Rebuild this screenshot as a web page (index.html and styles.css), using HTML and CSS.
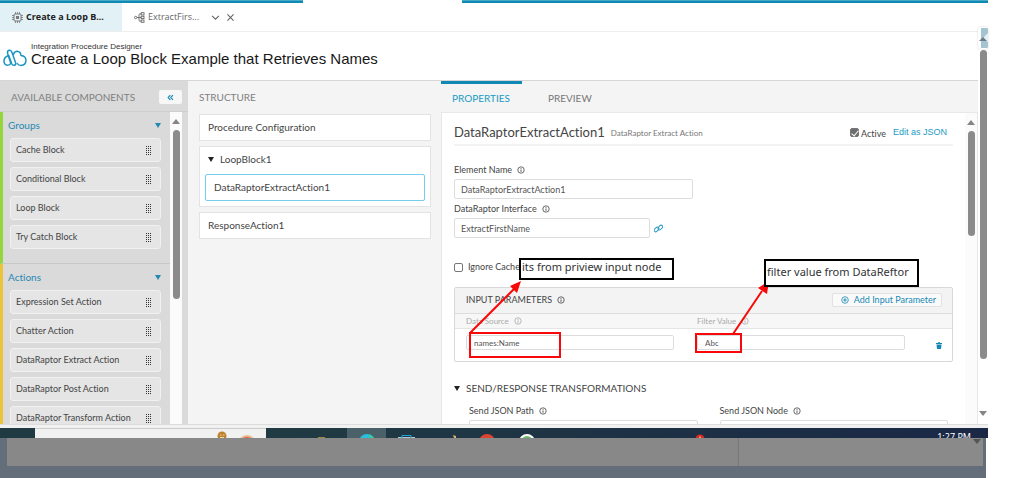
FILE: index.html
```html
<!DOCTYPE html>
<html lang="en">
<head>
<meta charset="utf-8">
<title>Integration Procedure Designer</title>
<link rel="stylesheet" href="styles.css">
</head>
<body>
<svg class="defs" aria-hidden="true">
  <symbol id="info" viewBox="0 0 8 8"><circle cx="4" cy="4" r="3.200" fill="none" stroke="currentColor" stroke-width=".8"/><path d="M4 3.500v2.300M4 2v.8" stroke="currentColor" stroke-width=".9"/></symbol>
  <symbol id="grip" viewBox="0 0 5 9"><path d="M.5 0v9M2.500 0v9M4.500 0v9" stroke="currentColor" stroke-width="1" stroke-dasharray="1 1"/></symbol>
</svg>
<div class="screen">
  <div class="strip"><span class="strip-left"></span><span class="strip-right"></span></div>
  <div class="window">
    <div class="app">
      <nav class="tabs">
        <a href="#" class="tab tab-on">
          <svg class="tab-icon" viewBox="0 0 11 11"><g fill="none" stroke="#777"><rect x="2" y="2" width="7" height="7" rx="1"/><path d="M3.500 0v2M5.500 0v2M7.500 0v2M3.500 9v2M5.500 9v2M7.500 9v2M0 3.500h2M0 5.500h2M0 7.500h2M9 3.500h2M9 5.500h2M9 7.500h2" stroke-width=".8"/></g><rect x="4" y="4" width="3" height="3" fill="#777"/></svg>
          <span>Create a Loop B...</span>
        </a>
        <a href="#" class="tab">
          <svg class="tab-icon" viewBox="0 0 11 11"><g fill="none" stroke="#666" stroke-width=".9"><circle cx="1.700" cy="5.500" r="1.200"/><path d="M3 5.500h4M7 1.800H5.800Q5 1.800 5 3v5q0 1.200.8 1.200H7"/><rect x="7.200" y=".7" width="2.800" height="2.300"/><rect x="7.200" y="4.300" width="2.800" height="2.300"/><rect x="7.200" y="8" width="2.800" height="2.300"/></g></svg>
          <span>ExtractFirs...</span>
        </a>
        <button class="tab-btn" aria-label="Tab menu"><svg viewBox="0 0 8 8"><path d="M1 2.500l3 3 3-3" fill="none" stroke="#666"/></svg></button>
        <button class="tab-btn" aria-label="Close tab"><svg viewBox="0 0 8 8"><path d="M1.300 1.300l5.400 5.400M6.700 1.300L1.300 6.700" fill="none" stroke="#666"/></svg></button>
      </nav>
      <header class="header">
        <svg class="logo" viewBox="0 0 24 18"><g fill="none" stroke="#1b96c0" stroke-width="1.500" stroke-linecap="round" stroke-linejoin="round"><path d="M4.500 7Q1 8.500 1 12q0 3.800 3.500 4.300 2.500 0 3.300-2L4.600 4.500Q4 1.800 6 1.200q1.900-.3 2.700 1.600l4 11.200q.3 2-1.500 2.300-1.700.2-2.500-1.600L5.800 6.500"/><path d="M10.500 5.500Q11 2.500 14 2.200q3.700.2 4 4.300 4.900.6 5 4.900-.3 4.800-5 5-2.300 0-3.700-1.800"/></g></svg>
        <div class="heading"><span class="eyebrow">Integration Procedure Designer</span><h1>Create a Loop Block Example that Retrieves Names</h1></div>
      </header>
      <main class="columns">
        <aside class="palette">
          <div class="palette-head"><h2>AVAILABLE COMPONENTS</h2><button class="collapse" aria-label="Collapse"><svg viewBox="0 0 8 8"><path d="M3.800 1.200L1.300 4l2.500 2.800M6.800 1.200L4.300 4l2.500 2.800" fill="none" stroke="#1589b5" stroke-width="1.300"/></svg></button></div>
          <div class="palette-body">
            <div class="palette-list">
              <section class="group green">
                <h3>Groups<svg class="tri" viewBox="0 0 6 5"><path d="M0 0h6L3 5z"/></svg></h3>
                <button class="item">Cache Block<svg><use href="#grip"/></svg></button>
                <button class="item">Conditional Block<svg><use href="#grip"/></svg></button>
                <button class="item">Loop Block<svg><use href="#grip"/></svg></button>
                <button class="item">Try Catch Block<svg><use href="#grip"/></svg></button>
              </section>
              <section class="group yellow">
                <h3>Actions<svg class="tri" viewBox="0 0 6 5"><path d="M0 0h6L3 5z"/></svg></h3>
                <button class="item">Expression Set Action<svg><use href="#grip"/></svg></button>
                <button class="item">Chatter Action<svg><use href="#grip"/></svg></button>
                <button class="item">DataRaptor Extract Action<svg><use href="#grip"/></svg></button>
                <button class="item">DataRaptor Post Action<svg><use href="#grip"/></svg></button>
                <button class="item">DataRaptor Transform Action<svg><use href="#grip"/></svg></button>
              </section>
            </div>
            <div class="scroll"><svg class="arrow" viewBox="0 0 8 5"><path d="M0 5h8L4 0z"/></svg><span class="thumb thumb-left"></span></div>
          </div>
        </aside>
        <section class="structure">
          <h2>STRUCTURE</h2>
          <div class="cards">
            <div class="card">Procedure Configuration</div>
            <div class="card card-loop">
              <div class="card-title"><svg class="tri dark" viewBox="0 0 6 5"><path d="M0 0h6L3 5z"/></svg>LoopBlock1</div>
              <div class="card card-on">DataRaptorExtractAction1</div>
            </div>
            <div class="card">ResponseAction1</div>
          </div>
        </section>
        <section class="properties">
          <nav class="ptabs"><a href="#" class="ptab ptab-on">PROPERTIES</a><a href="#" class="ptab">PREVIEW</a></nav>
          <div class="panel">
            <form class="form">
              <div class="title-row">
                <h2>DataRaptorExtractAction1</h2><span class="kind">DataRaptor Extract Action</span>
                <label class="active"><input type="checkbox" class="check" checked><span>Active</span></label><a href="#" class="json">Edit as JSON</a>
              </div>
              <div class="field"><label for="ename">Element Name <svg class="info"><use href="#info"/></svg></label><input id="ename" class="text wide" value="DataRaptorExtractAction1"></div>
              <div class="field"><label for="iface">DataRaptor Interface <svg class="info"><use href="#info"/></svg></label>
                <div class="with-link"><input id="iface" class="text mid" value="ExtractFirstName"><svg class="link" viewBox="0 0 8 8"><g fill="none" stroke="#2a9ac4" stroke-width=".9"><rect x="-.2" y="3.500" width="4.800" height="2.800" rx="1.400" transform="rotate(-45 2.200 4.900)"/><rect x="3.200" y="1.800" width="4.800" height="2.800" rx="1.400" transform="rotate(-45 5.600 3.200)"/></g></svg></div>
              </div>
              <label class="ignore"><input type="checkbox" class="check">Ignore Cache</label>
              <div class="params">
                <div class="params-head"><span>INPUT PARAMETERS <svg class="info"><use href="#info"/></svg></span>
                  <button type="button" class="add"><svg viewBox="0 0 8 8"><circle cx="4" cy="4" r="3.300" fill="none" stroke="#1589b5" stroke-width=".8"/><path d="M4 2.200v3.600M2.200 4h3.600" stroke="#1589b5" stroke-width=".9"/></svg>Add Input Parameter</button></div>
                <div class="params-cols sub"><label for="src">Data Source <svg class="info"><use href="#info"/></svg></label><label for="flt">Filter Value <svg class="info"><use href="#info"/></svg></label></div>
                <div class="params-cols row"><input id="src" class="text small" value="names:Name"><input id="flt" class="text small" value="Abc"><button type="button" class="trash" aria-label="Delete"><svg viewBox="0 0 6 7"><path d="M0 1h2V.3h2V1h2v1H0zM.5 2.500h5L5 7H1z" fill="#1589b5"/></svg></button></div>
              </div>
              <h3 class="send"><svg class="tri dark" viewBox="0 0 6 5"><path d="M0 0h6L3 5z"/></svg>SEND/RESPONSE TRANSFORMATIONS</h3>
              <div class="send-cols">
                <div class="field"><label for="path">Send JSON Path <svg class="info"><use href="#info"/></svg></label><input id="path" class="text"></div>
                <div class="field"><label for="node">Send JSON Node <svg class="info"><use href="#info"/></svg></label><input id="node" class="text"></div>
              </div>
            </form>
            <div class="scroll"><svg class="arrow" viewBox="0 0 8 5"><path d="M0 5h8L4 0z"/></svg><span class="thumb thumb-right"></span></div>
            <div class="notes">
              <svg class="note-art" viewBox="0 0 524 312"><g fill="none" stroke="#f80808" stroke-width="2"><rect x="28" y="220" width="90" height="24"/><rect x="254" y="221" width="45" height="18"/><path d="M28 220L73 175M291 221l29-43"/></g><path d="M79 168l-4 12-7-7zM327 168l-2 13-9-6z" fill="#f80808"/></svg>
              <div class="note note-a">its from priview input node</div>
              <div class="note note-b">filter value from DataReftor</div>
            </div>
          </div>
        </section>
      </main>
    </div>
    <div class="outer-scroll">
      <svg class="widget" viewBox="0 0 10 22"><path d="M3 1h7v20H3z" fill="#a5c4d1"/><path d="M4 12l6-6v9z" fill="#e7f0f4"/><path d="M1 14h8L5 10z" fill="#697d88"/></svg>
      <span class="outer-thumb"></span>
      <svg class="arrow down" viewBox="0 0 8 5"><path d="M0 0h8L4 5z"/></svg>
    </div>
  </div>
  <div class="ledge"></div>
  <footer class="taskbar">
    <div class="search"><svg viewBox="0 0 60 10"><circle cx="16" cy="7" r="4.500" fill="#bd8130"/><path d="M14 6h1.500M17 6h1.500M14 8.500h4" stroke="#f4dca8"/><circle cx="41" cy="15" r="9" fill="#e8b98a"/><circle cx="41" cy="15" r="7" fill="#e65b4e"/></svg></div>
    <svg class="apps" viewBox="0 0 460 10"><path d="M81 0h39v10H81z" fill="#4b616a"/><path d="M52 9h7v1h-7z" fill="#a28b38"/><circle cx="101" cy="14" r="8" fill="#27bfe0"/><path d="M103 6.300a8 8 0 0 1 5 3.700h-5z" fill="#39c9a0"/><path d="M132 9.500h17" stroke="#b8c8cc"/><path d="M136 10V7.500h9V10" fill="none" stroke="#1aa7e0"/><path d="M187 7l3 1v2h-2z" fill="#e0ad70"/><circle cx="221" cy="14" r="8" fill="#dc4430"/><circle cx="261" cy="14" r="8" fill="#fff"/><circle cx="261" cy="14" r="6" fill="#68bd69"/><circle cx="434" cy="11" r="4.500" fill="#d92c20"/><path d="M434 8.500v2" stroke="#fff"/></svg>
    <span class="clock">1:27 PM</span>
  </footer>
  <div class="under"><div class="under-main"></div><div class="under-side"><svg viewBox="0 0 8 5"><path d="M0 0h8L4 5z" fill="#555"/></svg></div></div>
</div>
</body>
</html>
```
FILE: styles.css
```css
* { box-sizing: border-box; }
body { margin: 0; background: #fff; color: #444; font: 9px/12px Lato, "Open Sans", sans-serif; font-variant-ligatures: none; }
h1, h2, h3 { margin: 0; font-weight: 400; }
a { color: inherit; text-decoration: none; }
button, input { font: inherit; color: inherit; font-variant-ligatures: none; }
button { border: 0; padding: 0; background: none; }
svg { flex: none; display: block; }
.defs { position: absolute; width: 0; height: 0; }
.screen { display: flex; flex-direction: column; height: 100vh; padding-right: 36px; overflow: hidden; }

.strip { display: flex; justify-content: space-between; gap: 159px; height: 3px; flex: none; }
.strip span { background: #1089b5; border-top: 1px solid #48aac6; }
.strip-left { width: 303px; }
.strip-right { flex: 1; }
.window { display: flex; flex: 1; min-height: 0; }
.app { display: flex; flex-direction: column; flex: 1; min-width: 0; }
.tabs { display: flex; align-items: center; height: 29px; flex: none; border-bottom: 1px solid #eee; font-family: "Open Sans", sans-serif; font-size: 9px; color: #666; }
.tab { display: flex; align-items: center; gap: 3px; height: 28px; padding-left: 12px; }
.tab-on { width: 122px; background: #e2f1f5; color: #222; font-weight: 700; }
.tab-icon { width: 11px; height: 11px; }
.tab-btn { margin-left: 6px; }
.tab + .tab-btn { margin-left: 12px; }
.tab-btn svg { width: 9px; height: 9px; }
.header { display: flex; align-items: center; gap: 4px; padding: 2px 3px 5px; height: 49px; flex: none; border-bottom: 1px solid #d6d6d6; }
.logo { width: 24px; height: 18px; margin-top: 6px; }
.heading { font-family: "Liberation Sans", sans-serif; display: flex; flex-direction: column; }
.eyebrow { font-size: 8px; line-height: 8px; color: #333; }
h1 { font-size: 15px; line-height: 16px; color: #181818; }
.columns { display: grid; grid-template-columns: 188px 253px 1fr; flex: 1; min-height: 0; background: #f4f4f4; }

.palette { display: flex; flex-direction: column; min-height: 0; background: #dadada; }
.palette-head { display: flex; justify-content: space-between; align-items: center; height: 31px; padding: 2px 6px 0 11px; border-bottom: 1px solid #cecece; flex: none; }
.palette-head h2, .structure h2 { font-size: 10px; color: #808080; }
.collapse { display: grid; place-items: center; width: 23px; height: 14px; border-radius: 2px; background: #f7f7f7; }
.collapse svg { width: 7px; height: 7px; }
.palette-body { display: flex; flex: 1; min-height: 0; padding-right: 6px; }
.palette-list { flex: 1; overflow: hidden; }
.group { display: flex; flex-direction: column; gap: 5px; padding: 0 9px 14px 7px; border-left: 3px solid; border-bottom: 1px solid #c8c8c8; }
.green { border-left-color: #95d63c; }
.yellow { border-left-color: #eac53b; }
.group h3 { display: flex; align-items: center; justify-content: space-between; height: 21px; padding-top: 5px; margin-left: -2px; font-size: 10px; color: #2589b2; }
.tri { width: 6px; height: 5px; fill: #2589b2; }
.dark { fill: #222; }
.item { display: flex; align-items: center; justify-content: space-between; height: 24px; padding: 0 9px 0 5px; border: 1px solid #f1f1f1; border-radius: 3px; background: #e5e5e5; }
.item svg { width: 5px; height: 9px; color: #333; }
.scroll { display: flex; flex-direction: column; align-items: center; gap: 6px; width: 12px; padding-top: 7px; background: #fbfbfb; }
.arrow { width: 8px; height: 5px; fill: #858585; }
.thumb { width: 7px; border-radius: 4px; background: #8b8b8b; }
.thumb-left { height: 169px; }
.thumb-right { height: 105px; }

.structure h2 { height: 31px; padding: 10px 0 0 11px; }
.cards { display: flex; flex-direction: column; gap: 5px; padding: 2px 10px 0 11px; font-size: 10px; }
.card { display: flex; align-items: center; height: 27px; padding: 0 9px 1px 8px; border: 1px solid #e3e3e3; background: #fff; }
.card-loop { display: block; height: 61px; padding: 0 5px; }
.card-title { display: flex; align-items: center; gap: 6px; height: 27px; padding: 0 4px 3px 3px; }
.card-on { border-color: #75ccec; border-radius: 2px; }

.properties { display: flex; flex-direction: column; min-width: 0; min-height: 0; }
.ptabs { display: flex; height: 31px; flex: none; font-size: 10px; color: #777; }
.ptab { padding: 11px 11px 0; margin-left: 15px; }
.ptab-on { width: 81px; margin: 0; padding-top: 8px; border-top: 3px solid #1089b5; color: #199bc4; }
.panel { position: relative; display: flex; flex: 1; min-height: 0; border: 1px solid #e8e8e8; border-bottom: 0; background: #fff; }
.form { display: flex; flex-direction: column; flex: 1; min-width: 0; padding: 6px 12px 0; overflow: hidden; }
.title-row { display: flex; align-items: center; height: 27px; flex: none; border-bottom: 2px solid #f3f3f3; }
.title-row h2 { font-size: 13px; }
.kind { margin-left: 6px; padding-top: 2px; font-size: 8px; color: #777; }
.active { display: flex; align-items: center; gap: 2px; margin-left: auto; padding-top: 2px; }
.active span { padding-top: 3px; }
.check { appearance: none; width: 9px; height: 9px; margin: 0; border: 1px solid #777; border-radius: 2px; background: #fff; }
.check:checked { background: #6e6e6e; }
.check:checked::before { content: ""; display: block; width: 3px; height: 6px; margin-left: 2px; border: solid #fff; border-width: 0 1px 1px 0; transform: rotate(40deg); }
.json { margin: 0 6px 0 7px; padding-top: 1px; font-family: "Liberation Sans", sans-serif; color: #199bc4; }
.field { display: flex; flex-direction: column; flex: none; row-gap: 1px; }
.title-row + .field { margin-top: 16px; }
.field label { display: flex; align-items: center; gap: 5px; height: 16px; }
.info { width: 8px; height: 8px; }
.text { width: 100%; min-width: 0; height: 20px; padding: 0 6px; border: 1px solid #ddd; border-radius: 2px; background: #fff; color: #555; }
.wide { width: 239px; }
.field + .field { margin-top: 2px; }
.mid { width: 196px; }
.with-link { display: flex; align-items: center; gap: 4px; }
.link { width: 9px; height: 9px; }
.ignore { display: flex; align-items: center; gap: 5px; height: 14px; margin-top: 22px; flex: none; }
.params { margin-top: 13px; flex: none; border: 1px solid #d8d8d8; border-radius: 2px; }
.params-head { display: flex; align-items: center; justify-content: space-between; height: 26px; padding: 0 10px 1px 11px; background: #f3f3f3; border-bottom: 1px solid #ddd; }
.params-head span { display: flex; align-items: center; gap: 5px; }
.add { display: flex; align-items: center; gap: 5px; height: 14px; padding: 0 5px 0 8px; border: 1px solid #e2e2e2; border-radius: 2px; background: #fafafa; color: #1589b5; }
.add svg { width: 8px; height: 8px; }
.params-cols { display: grid; grid-template-columns: 1fr 1fr 14px; column-gap: 23px; padding: 0 10px 0 11px; }
.sub { height: 15px; background: #f7f7f7; border-bottom: 1px solid #e5e5e5; color: #aaa; font-size: 8px; }
.sub label { display: flex; align-items: center; gap: 5px; }
.row { align-items: start; height: 32px; padding-top: 6px; }
.small { height: 15px; padding: 0 7px; font-size: 8px; }
.trash { width: 6px; margin: 7px 0 0 auto; }
.trash svg { width: 6px; height: 7px; }
.send { display: flex; align-items: center; gap: 6px; height: 14px; margin-top: 19px; flex: none; font-size: 10px; }
.send-cols { display: grid; grid-template-columns: 1fr 1fr; gap: 22px; margin-top: 8px; padding: 0 5px 0 15px; }
.send-cols .field { margin: 0; }

.notes { position: absolute; inset: 0 0 auto 0; height: 0; }
.note-art { position: absolute; left: 0; top: 0; width: 524px; height: 312px; }
.note { position: absolute; border: 2px solid #000; background: #fff; font: 11px/13px "Noto Sans", sans-serif; color: #333; white-space: nowrap; padding-left: 1px; }
.note-a { left: 77px; top: 145px; width: 155px; height: 22px; }
.note-b { left: 322px; top: 146px; width: 155px; height: 28px; padding-top: 4px; }

.outer-scroll { display: flex; flex-direction: column; align-items: center; width: 10px; padding-top: 24px; }
.widget { width: 10px; height: 22px; border-radius: 3px; box-shadow: 0 0 2px #ccc; }
.outer-thumb { width: 7px; height: 309px; margin-top: 1px; border-radius: 4px; background: #8b8b8b; }
.down { margin: auto 0 8px; }
.ledge { height: 4px; flex: none; border-top: 1px solid #ddd; background: #f1f1f1; }
.taskbar { display: flex; height: 10px; flex: none; overflow: hidden; background: linear-gradient(90deg, #203a43 30%, #1a2846); color: #fff; }
.search { width: 231px; margin-left: 35px; background: #f1f1f1; border-top: 1px solid #ccc; }
.search svg { width: 60px; height: 10px; margin-left: 171px; }
.apps { width: 460px; height: 10px; }
.clock { margin: 3px 17px 0 auto; font-family: "Noto Sans", sans-serif; }
.under { display: flex; height: 40px; margin-right: 2px; padding: 0 3px 12px 7px; flex: none; background: #646e7b; }
.under-main { flex: 3; background: #888; border-right: 1px solid #777; }
.under-side { flex: 1; background: #8a8a8a; }
.under-side svg { width: 8px; height: 5px; margin: 1px 2px 0 auto; }
```
